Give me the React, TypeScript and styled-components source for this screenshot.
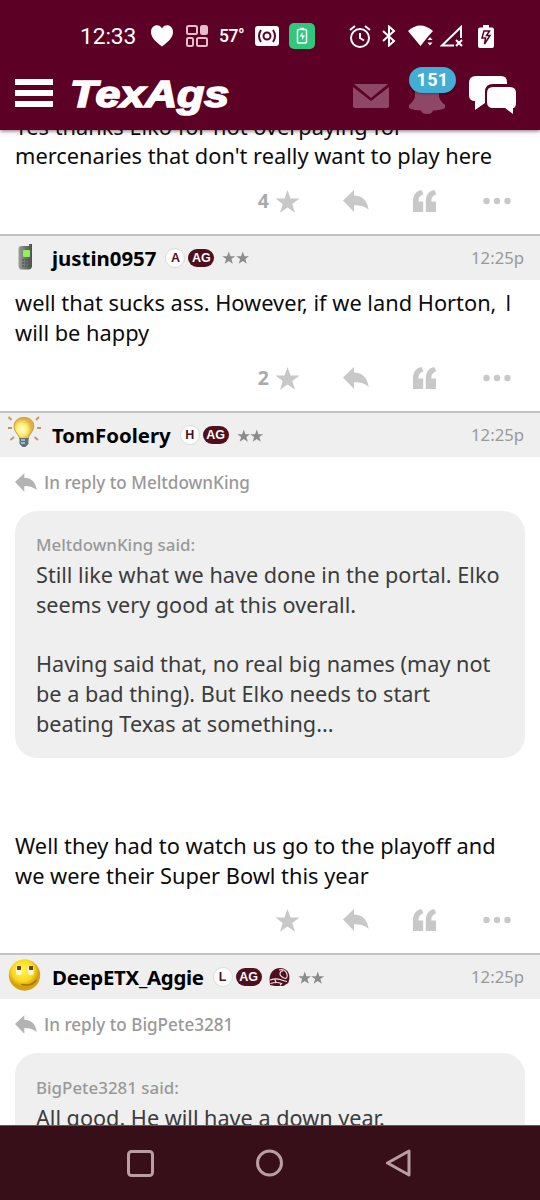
import React from 'react';
import styled, { createGlobalStyle } from 'styled-components';

const Global = createGlobalStyle`
  * { box-sizing: border-box; }
  body { margin: 0; background: #fff; font-family: "Noto Sans", sans-serif; }
  p { margin: 0; }
  svg { display: block; flex: none; }
`;

const Screen = styled.div`
  width: 540px;
  height: 1200px;
  display: flex;
  flex-direction: column;
  overflow: hidden;
  background: #fff;
`;

const TopBar = styled.header`
  flex: none;
  height: 130px;
  background: #5c0025;
  box-shadow: 0 1px 4px rgba(60, 0, 25, 0.6);
  z-index: 1;
  color: #fff;
`;

const StatusBar = styled.div`
  height: 72px;
  padding-left: 80px;
  display: flex;
  align-items: center;
  font-family: Roboto, sans-serif;
`;

const Clock = styled.span`
  width: 70px;
  font-size: 22.8px;
  letter-spacing: -0.1px;
  line-height: 72px;
  padding-top: 2px;
`;

const Temperature = styled.span`
  width: 36px;
  font-size: 17.500px;
  font-weight: 500;
  line-height: 20px;
  letter-spacing: -0.4px;
`;

const Spot = styled.span<{ $gap?: number }>`
  display: flex;
  margin-right: ${(p) => p.$gap ?? 0}px;
`;

const NavBar = styled.div`
  height: 58px;
  padding: 0 23px 0 15px;
  display: flex;
  align-items: flex-start;
`;

const Burger = styled.div`
  width: 38px;
  margin: 7px 15px 0 0;
  display: grid;
  gap: 5px;
`;

const BurgerLine = styled.span`
  height: 6px;
  background: #fff;
`;

const NavIcons = styled.div`
  margin-left: auto;
  display: flex;
`;

const BellWrap = styled.div`
  position: relative;
  margin: 12px 24px 0 20px;
`;

const Count = styled.span`
  position: absolute;
  left: 0;
  top: -17px;
  width: 47px;
  height: 26px;
  border-radius: 13px;
  background: #43add5;
  font: 700 18px/25px Roboto, sans-serif;
  letter-spacing: 0.4px;
  text-align: center;
  box-shadow: 0 1px 2px rgba(0, 0, 0, 0.3);
`;

const Feed = styled.main`
  flex: 1;
  min-height: 0;
  overflow: hidden;
`;

const PostHead = styled.div`
  height: 46px;
  padding: 0 16px 0 4px;
  display: flex;
  align-items: center;
  background: #efefef;
  border-top: 2px solid #c3c3c3;
`;

const Avatar = styled.span`
  width: 48px;
  height: 44px;
  display: flex;
  align-items: center;
`;

const UserName = styled.span<{ $tracking?: number }>`
  font-size: 20.4px;
  font-weight: 700;
  line-height: 30px;
  color: #000;
  letter-spacing: ${(p) => p.$tracking ?? 0}px;
`;

const RoundBadge = styled.span`
  width: 20px;
  height: 20px;
  margin-left: 9px;
  border-radius: 50%;
  border: 1px solid #d8dedb;
  background: #fff;
  color: #500f1c;
  font: 700 12.5px/18px "Liberation Sans", sans-serif;
  text-align: center;
`;

const AgBadge = styled.span`
  width: 26px;
  height: 18px;
  margin: 0 8px 0 3px;
  border-radius: 9px;
  background: #500f1c;
  color: #fff;
  font: 700 12.5px/18px "Liberation Sans", sans-serif;
  text-align: center;
`;

const Time = styled.span`
  margin-left: auto;
  font-size: 16.7px;
  line-height: 24px;
  color: #999;
`;

/* The pronoun-style capital I is set without slab serifs. */
const PlainCapital = styled.span<{ $lead?: number }>`
  margin-left: ${(p) => p.$lead ?? 0}px;
  font-family: "Open Sans", sans-serif;
  line-height: 0;
`;

const Text = styled.p<{ $top?: number; $bottom?: number }>`
  padding: ${(p) => p.$top ?? 0}px 15px ${(p) => p.$bottom ?? 0}px;
  font-size: 21.8px;
  line-height: 29.7px;
  color: #0c0c0c;
  white-space: nowrap;
`;

const Actions = styled.div`
  height: 62px;
  padding: 0 29px 4px 0;
  display: grid;
  grid-template-columns: 270px 30px 110px 1fr 28px;
  align-items: center;
  color: #c8c8c8;
`;

const Likes = styled.span`
  padding-right: 1px;
  text-align: right;
  font-size: 19.500px;
  font-weight: 700;
  line-height: 24px;
  color: #aaa;
`;

const ActionSlot = styled.span<{ $left: number }>`
  padding-left: ${(p) => p.$left}px;
`;

const ReplyTo = styled.div`
  height: 54px;
  padding: 2px 0 6px 15px;
  display: flex;
  align-items: center;
  gap: 7px;
  font-size: 17.1px;
  font-weight: 500;
  color: #999;
  svg { color: #b3b3b3; }
  ${PlainCapital} { font-weight: 600; }
`;

const Quote = styled.blockquote<{ $top: number }>`
  margin: 0 15px;
  height: 247px;
  padding: ${(p) => p.$top}px 21px 0;
  border-radius: 22px;
  background: #efefef;
  font-size: 21.65px;
  line-height: 29.7px;
  color: #3c3c3c;
  white-space: nowrap;
`;

const Quoted = styled.p`
  font-size: 16.9px;
  font-weight: 500;
  color: #999;
`;

const SystemNav = styled.footer`
  flex: none;
  height: 75px;
  display: flex;
  padding: 23px 0 0 126px;
  gap: 101px;
  background: #370f18;
  border-top: 1px solid #70505a;
`;

const ReplyIcon = ({ w = 26, h = 22 }: { w?: number; h?: number }) => (
  <svg width={w} height={h} viewBox="0 0 26 22" fill="currentColor">
    <path d="M0 10.500 11 0v5.500c8 0 13.500 5 14.700 14.500C22 16.500 17.500 15.200 11 15.200V22z" />
  </svg>
);

const Star = ({ size = 25 }: { size?: number }) => (
  <svg width={size} height={size} viewBox="0 0 25 25" fill="currentColor">
    <path d="m12.500 1 3 8.500h9l-7.200 5.400 2.700 8.900-7.500-5.300-7.500 5.300 2.700-8.900L.5 9.500h9z" />
  </svg>
);

const StarPair = styled.span`
  display: flex;
  color: #8b8b8b;
`;

const Rank = () => (
  <StarPair>
    <Star size={13.5} />
    <Star size={13.5} />
  </StarPair>
);

const PostActions = ({ likes }: { likes?: number }) => (
  <Actions>
    <Likes>{likes}</Likes>
    <ActionSlot $left={5}><Star /></ActionSlot>
    <ActionSlot $left={43}><ReplyIcon /></ActionSlot>
    <ActionSlot $left={3}>
      <svg width="24" height="23" viewBox="0 0 24 23" fill="currentColor">
        <path d="M0 22V11C0 5 3 1 8.500 0l2 4.200C7 5.500 5.500 7.500 5.500 11.500H10.200V22z" />
        <path d="M12.800 22V11c0-6 3-10 8.500-11l2 4.200c-3.500 1.300-5 3.300-5 7.300H23V22z" />
      </svg>
    </ActionSlot>
    <svg width="28" height="8" viewBox="0 0 28 8" fill="currentColor">
      <circle cx="3.500" cy="4" r="3.200" />
      <circle cx="14" cy="4" r="3.200" />
      <circle cx="24.500" cy="4" r="3.200" />
    </svg>
  </Actions>
);

const PhoneAvatar = () => (
  <svg width="40" height="40" viewBox="0 0 40 40">
    <defs>
      <linearGradient id="case" x2="1">
        <stop stopColor="#9ba09a" />
        <stop offset="0.500" stopColor="#6f746d" />
        <stop offset="1" stopColor="#4f534f" />
      </linearGradient>
    </defs>
    <path d="M25 6h3v23q-1 2.500-3 2.500h-8.500q-2-1-2-3.500V11q0-3 3-3H25z" fill="url(#case)" />
    <rect x="19" y="12" width="7" height="7" rx="1" fill="#8ff25c" />
    <path d="M18 22h8M18 25h8M18 28h8" stroke="#4a4f4b" strokeDasharray="2 1" />
  </svg>
);

const BulbAvatar = () => (
  <svg width="40" height="40" viewBox="0 3 40 40">
    <defs>
      <radialGradient id="glass" cx="0.400" cy="0.550">
        <stop stopColor="#fffdd8" />
        <stop offset="0.550" stopColor="#ffee70" />
        <stop offset="1" stopColor="#e0ae42" />
      </radialGradient>
    </defs>
    <path d="M4.500 5l3 3M35 5l-3 3M4 16h4M33 16h4M6.500 28l3.500-3M34 28l-3.500-3" stroke="#b99a63" strokeWidth="1.800" />
    <path d="M12.500 21C7 13 11.500 5.500 20 5.500S33 13 27 21c-2 3-2.500 3-2.500 6h-9c0-3-1-3-3-6z" fill="url(#glass)" stroke="#c99a42" />
    <path d="M15.500 26h9v6l-3 3h-3l-3-3z" fill="#5d7480" />
    <path d="M17 28h4M17 31h4" stroke="#b6cbd0" strokeWidth="1.500" />
  </svg>
);

const SmileAvatar = () => (
  <svg width="40" height="40" viewBox="0 0.500 40 40">
    <defs>
      <radialGradient id="face" cx="0.450" cy="0.350">
        <stop stopColor="#fff54e" />
        <stop offset="0.700" stopColor="#f9d91d" />
        <stop offset="1" stopColor="#d5a10e" />
      </radialGradient>
    </defs>
    <circle cx="20.500" cy="18.500" r="15.700" fill="url(#face)" />
    <rect x="12" y="9" width="5.500" height="9.500" rx="2" fill="#fff9cf" />
    <rect x="24" y="9" width="5.500" height="9.500" rx="2" fill="#fff9cf" />
    <path d="M13 9.500h4v4h-4zM25 9.500h4v4h-4z" fill="#674316" />
    <path d="M18 28q10 2 14-4" fill="none" stroke="#a8740f" strokeWidth="1.600" strokeLinecap="round" />
  </svg>
);

const Helmet = () => (
  <svg width="22" height="20" viewBox="0 0 22 20">
    <path d="M1.500 12C2 5 6 1 12 1c7 0 10 5 9.300 11l-1 4-5 3H7l-5-1z" fill="#500f1c" />
    <path d="M11 3c3-1 7 0 8 4s-1 5-3 4-4-2-4-4 1-3 3-3" fill="none" stroke="#e9dadd" strokeWidth="1.200" />
    <path d="M2 13q6-2 10-.5t7 2M2.500 16.500q6-2 11 0l-1.500 2M7 12.500l1 3" fill="none" stroke="#f6eeee" strokeWidth="1.200" />
  </svg>
);

const Logo = () => (
  <svg width="164" height="50" viewBox="0 0 164 50" overflow="visible">
    <text x="2" y="34.500" textLength="159" lengthAdjust="spacingAndGlyphs" fill="#fff" stroke="#fff" strokeWidth="1.700" fontFamily="Liberation Sans" fontWeight="700" fontStyle="italic" fontSize="36">TexAgs</text>
  </svg>
);

interface HeaderProps {
  name: string;
  letter: string;
  avatar: React.ReactNode;
  tracking?: number;
  helmet?: boolean;
}

const HelmetSlot = styled.span`
  margin: 0 8px 0 -2px;
`;

const PostHeader = ({ name, letter, avatar, tracking, helmet }: HeaderProps) => (
  <PostHead>
    <Avatar>{avatar}</Avatar>
    <UserName $tracking={tracking}>{name}</UserName>
    <RoundBadge>{letter}</RoundBadge>
    <AgBadge>AG</AgBadge>
    {helmet && <HelmetSlot><Helmet /></HelmetSlot>}
    <Rank />
    <Time>12:25p</Time>
  </PostHead>
);

const ReplyLine = ({ to }: { to: string }) => (
  <ReplyTo>
    <ReplyIcon w={22} h={19} />
    <span><PlainCapital>I</PlainCapital>n reply to {to}</span>
  </ReplyTo>
);

const FirstPost = styled(Text)`
  height: 42px;
  display: flex;
  flex-direction: column;
  justify-content: flex-end;
`;

export default function App() {
  return (
    <Screen>
      <Global />
      <TopBar>
        <StatusBar>
          <Clock>12:33</Clock>
          <Spot $gap={12}>
            <svg width="24" height="24" viewBox="0 0 24 24" fill="#fff"><path d="M12 22.500C4.500 17 1 13 1 8c0-7 8-9 11-3.500C15 -1 23 1 23 8c0 5-3.500 9-11 14.500z" /></svg>
          </Spot>
          <Spot $gap={11}>
            <svg width="22" height="22" viewBox="0 0 22 22" fill="none" stroke="#e3bdca" strokeWidth="2">
              <rect x="1" y="1" width="10" height="8" rx="1.500" /><rect x="15" y="1" width="6" height="8" rx="1.500" fill="#e3bdca" />
              <rect x="1" y="13" width="6" height="8" rx="1.500" /><rect x="11" y="13" width="10" height="8" rx="1.500" />
            </svg>
          </Spot>
          <Temperature>57°</Temperature>
          <Spot $gap={10}>
            <svg width="24" height="20" viewBox="0 0 24 20" fill="none" stroke="#5c0025" strokeWidth="2">
              <rect width="24" height="20" rx="3" fill="#fff" stroke="none" /><circle cx="12" cy="10" r="3.500" />
              <path d="M6 4Q2 10 6 16M18 4q4 6 0 12" />
            </svg>
          </Spot>
          <Spot $gap={34}>
            <svg width="26" height="26" viewBox="0 0 26 26" fill="none" stroke="#fff" strokeWidth="1.500">
              <rect width="26" height="26" rx="5" fill="#2fc87d" stroke="none" /><rect x="8.500" y="6.500" width="9" height="13.500" rx="1" /><path d="M11 5.500h4" />
              <path d="m13.500 9-3 4.500h2.500V17l3-4.500h-2.500z" fill="#fff" stroke="none" />
            </svg>
          </Spot>
          <Spot $gap={11}>
            <svg width="22" height="23" viewBox="0 0 22 23" fill="none" stroke="#fff" strokeWidth="2">
              <circle cx="11" cy="13" r="9" /><path d="M11 8v5l4 2.500M1 5l5-4M21 5l-5-4" />
            </svg>
          </Spot>
          <Spot $gap={12}>
            <svg width="14" height="22" viewBox="0 0 14 22" fill="none" stroke="#fff" strokeWidth="2"><path d="m1 6 11 10-5 4.500v-19L12 6 1 16" /></svg>
          </Spot>
          <Spot $gap={6}>
            <svg width="26" height="22" viewBox="0 0 26 22" fill="#fff"><path d="M0 6Q12-5 25 6L20 11.500 12.500 21zM19.500 15l2.500-3 2.500 3zM19.500 17.500h5l-2.500 3z" /></svg>
          </Spot>
          <Spot $gap={15}>
            <svg width="23" height="22" viewBox="0 0 23 22" fill="none" stroke="#fff" strokeWidth="2"><path d="M14 20.500H2L21 2v11M16 15l6 6M22 15l-6 6" /></svg>
          </Spot>
          <Spot>
            <svg width="16" height="23" viewBox="0 0 16 23"><path d="M2 2.500h3V0h6v2.500h3q2 0 2 2V21q0 2-2 2H2q-2 0-2-2V4.500q0-2 2-2z" fill="#fff" /><path d="m6 6-2 7h3.500l-1 6L12 10.500H8.500l3-4.500z" fill="none" stroke="#5c0025" strokeWidth="1.500" /></svg>
          </Spot>
        </StatusBar>
        <NavBar>
          <Burger><BurgerLine /><BurgerLine /><BurgerLine /></Burger>
          <Logo />
          <NavIcons>
            <Spot>
              <svg width="36" height="37" viewBox="0 0 36 37" fill="#8e4766"><path d="M1 12h34L18 26zM0 15l18 14 18-14v19q0 2-2 2H2q-2 0-2-2z" /></svg>
            </Spot>
            <BellWrap>
              <svg width="36" height="31" viewBox="0 0 36 31" fill="#8e4766"><path d="M6 0h24v12q0 4 6 9v3q-4 2-12 2.500-1 3.500-6 3.500t-6-3.500Q4 26 0 24v-3q6-5 6-9z" /></svg>
              <Count>151</Count>
            </BellWrap>
            <svg width="48" height="43" viewBox="0 0 48 43" fill="#fff">
              <path d="M7 4h25q6 0 6 6v2H24q-8 0-8 8v11l-10 7V29q-6 0-6-6V11q0-7 7-7z" />
              <path d="M24 15h17q6 0 6 6v9q0 6-3 6v6l-8-6H24q-6 0-6-6v-9q0-6 6-6z" />
            </svg>
          </NavIcons>
        </NavBar>
      </TopBar>
      <Feed>
        <FirstPost $bottom={1}>Yes thanks Elko for not overpaying for<br />mercenaries that don't really want to play here</FirstPost>
        <PostActions likes={4} />
        <PostHeader name="justin0957" letter="A" avatar={<PhoneAvatar />} />
        <Text $top={8} $bottom={2}>well that sucks ass. However, if we land Horton, <PlainCapital $lead={3}>I</PlainCapital><br />will be happy</Text>
        <PostActions likes={2} />
        <PostHeader name="TomFoolery" letter="H" avatar={<BulbAvatar />} />
        <ReplyLine to="MeltdownKing" />
        <Quote $top={19}>
          <Quoted>MeltdownKing said:</Quoted>
          <p>Still like what we have done in the portal. Elko<br />seems very good at this overall.</p>
          <br />
          <p>Having said that, no real big names (may not<br />be a bad thing). But Elko needs to start<br />beating Texas at something...</p>
        </Quote>
        <Text $top={73} $bottom={0.5}>Well they had to watch us go to the playoff and<br />we were their Super Bowl this year</Text>
        <PostActions />
        <PostHeader name="DeepETX_Aggie" letter="L" avatar={<SmileAvatar />} tracking={-0.3} helmet />
        <ReplyLine to="BigPete3281" />
        <Quote $top={19.5}>
          <Quoted>BigPete3281 said:</Quoted>
          <p>All good. He will have a down year.</p>
        </Quote>
      </Feed>
      <SystemNav>
        <svg width="28" height="28" viewBox="0 0 28 28" fill="none" stroke="#b99ea6" strokeWidth="3"><rect x="2.500" y="2.500" width="24" height="24" rx="3" /></svg>
        <svg width="28" height="28" viewBox="0 0 28 28" fill="none" stroke="#b99ea6" strokeWidth="3"><circle cx="14.500" cy="14" r="12" /></svg>
        <svg width="28" height="28" viewBox="0 0 28 28" fill="none" stroke="#b99ea6" strokeWidth="3" strokeLinejoin="round"><path d="M25 2v24L3.500 14z" /></svg>
      </SystemNav>
    </Screen>
  );
}
